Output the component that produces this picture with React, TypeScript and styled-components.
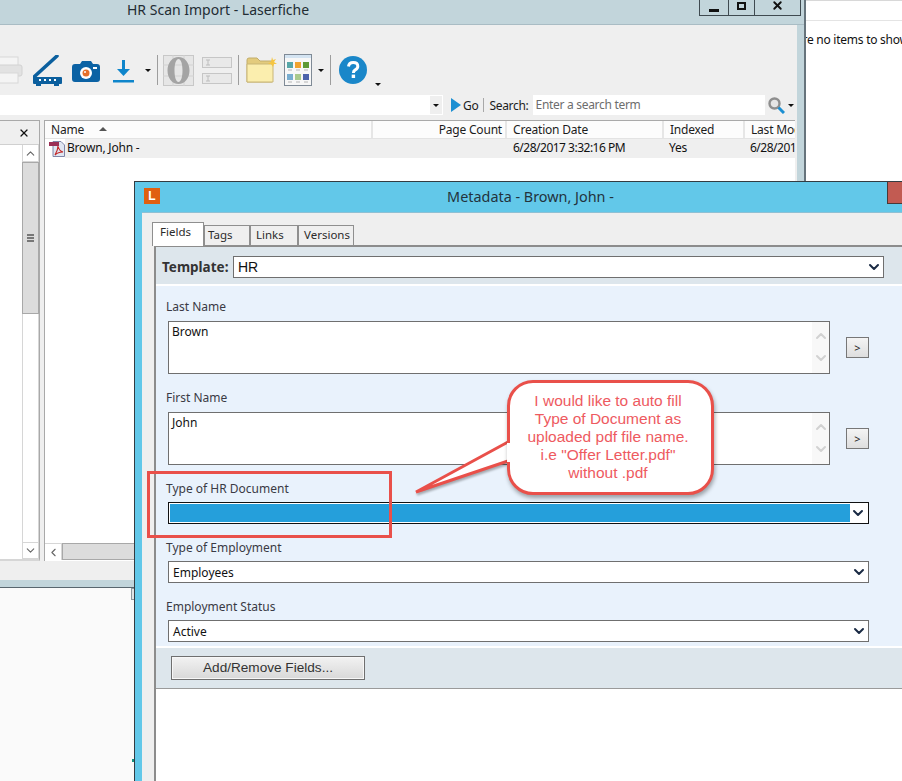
import * as React from 'react';
import styled, { createGlobalStyle } from 'styled-components';
import { ChevronDown, ChevronLeft, ChevronUp, X } from 'lucide-react';

const Global = createGlobalStyle`
  html, body {
    margin: 0;
    padding: 0;
    background: #fff;
  }
  * {
    box-sizing: border-box;
  }
`;

const uiFont = `'Noto Sans', 'Open Sans', sans-serif`;
const arial = `'Liberation Sans', Arial, sans-serif`;

const Desktop = styled.div`
  position: relative;
  width: 902px;
  height: 781px;
  overflow: hidden;
  background: #fff;
  font-family: ${uiFont};
  font-size: 12px;
  color: #1c1c1c;
`;

/* ---- back windows ---- */

const MainWindow = styled.div`
  position: absolute;
  left: 0;
  top: 0;
  width: 806px;
  height: 580px;
  display: flex;
  flex-direction: column;
  background: #fff;
  border-right: 2px solid #66747c;
`;

const TitleBar = styled.div`
  position: relative;
  height: 25px;
  flex: none;
  background: #c2d5db;
  border-bottom: 1px solid #a9bcc4;
  font-size: 14px;
  line-height: 19px;
  color: #222c33;
  padding-left: 127px;
`;

const WindowButtons = styled.div`
  position: absolute;
  left: 699px;
  top: 0;
  height: 16px;
  display: flex;
  border: 1px solid #3f4a50;
  border-top: 0;
`;

const WindowButton = styled.div<{ $w: number }>`
  width: ${p => p.$w}px;
  display: flex;
  align-items: center;
  justify-content: center;
  & + & {
    border-left: 1px solid #3f4a50;
  }
`;

const MinGlyph = styled.span`
  width: 10px;
  height: 3px;
  margin-top: 5px;
  background: #111;
`;

const MaxGlyph = styled.span`
  width: 9px;
  height: 8px;
  margin-top: -3px;
  border: 2px solid #111;
`;

const WindowBody = styled.div`
  flex: 1;
  display: flex;
  flex-direction: column;
  margin-right: 7px;
  background: #efefef;
  min-height: 0;
`;

const BodyBand = styled.div`
  position: absolute;
  top: 25px;
  right: 0;
  width: 7px;
  bottom: 0;
  background: #c2d5db;
`;

const Toolbar = styled.div`
  height: 70px;
  flex: none;
  display: flex;
  align-items: center;
  padding-top: 20px;
`;

const Tool = styled.span<{ $left: number; $top?: number }>`
  display: flex;
  flex: none;
  margin-left: ${p => p.$left}px;
  margin-top: ${p => p.$top || 0}px;
`;

const ToolSep = styled.span<{ $left: number }>`
  flex: none;
  width: 1px;
  height: 30px;
  margin-left: ${p => p.$left}px;
  background: #9d9d9d;
`;

const Caret = styled.span<{ $left: number; $top?: number }>`
  flex: none;
  margin-left: ${p => p.$left}px;
  margin-top: ${p => p.$top || 0}px;
  width: 0;
  height: 0;
  border-left: 3px solid transparent;
  border-right: 3px solid transparent;
  border-top: 3px solid #111;
`;

const AddressRow = styled.div`
  height: 20px;
  flex: none;
  display: flex;
  align-items: center;
  letter-spacing: -0.3px;
`;

const AddressField = styled.div`
  width: 443px;
  height: 20px;
  flex: none;
  background: #fff;
  display: flex;
  justify-content: flex-end;
  align-items: center;
`;

const AddressArrow = styled.div`
  width: 12px;
  height: 18px;
  margin-right: 1px;
  background: #efefef;
  display: flex;
  align-items: center;
  justify-content: center;
`;

const GoTriangle = styled.span`
  margin-left: 8px;
  width: 0;
  height: 0;
  border-top: 7px solid transparent;
  border-bottom: 7px solid transparent;
  border-left: 10px solid #1b8fd2;
`;

const GoLabel = styled.span`
  margin-left: 2px;
`;

const AddressSep = styled.span`
  width: 1px;
  height: 14px;
  margin: 0 5px 0 5px;
  background: #a8a8a8;
`;

const SearchField = styled.div`
  width: 232px;
  height: 20px;
  margin-left: 4px;
  padding-left: 3px;
  background: #fff;
  color: #6d6d6d;
  line-height: 20px;
`;

const SearchGo = styled.span`
  display: flex;
  align-items: center;
  margin-left: 3px;
`;

const Panes = styled.div`
  flex: 1;
  min-height: 0;
  margin-top: 5px;
  display: flex;
  padding-bottom: 19px;
`;

const TreePane = styled.div`
  width: 40px;
  flex: none;
  display: flex;
  flex-direction: column;
  background: #fff;
  border-top: 1px solid #a9a9a9;
  border-right: 1px solid #a9a9a9;
  border-bottom: 2px solid #d6d6d6;
`;

const TreeHead = styled.div`
  height: 24px;
  flex: none;
  background: #efefef;
  border-bottom: 1px solid #d0d0d0;
  display: flex;
  align-items: center;
  justify-content: flex-end;
  padding-right: 9px;
`;

const VScroll = styled.div`
  flex: 1;
  width: 17px;
  margin-left: 22px;
  display: flex;
  flex-direction: column;
  border-left: 1px solid #d6d6d6;
  border-right: 1px solid #d6d6d6;
  min-height: 0;
  justify-content: space-between;
`;

const ScrollButton = styled.div`
  height: 17px;
  flex: none;
  display: flex;
  align-items: center;
  justify-content: center;
  background: #fff;
  color: #666;
  border-bottom: 1px solid #d6d6d6;
`;

const ScrollEnd = styled(ScrollButton)`
  border-bottom: 1px solid #d6d6d6;
  border-top: 1px solid #d6d6d6;
`;

const VThumb = styled.div`
  height: 152px;
  margin: 0 -1px;
  flex: none;
  background: #dcdcdc;
  border: 1px solid #a8a8a8;
  display: flex;
  flex-direction: column;
  align-items: center;
  justify-content: center;
  gap: 1px;
`;

const GripLine = styled.span`
  width: 7px;
  height: 2px;
  background: #777;
`;

const Spacer = styled.div`
  flex: 1;
`;

const ListPane = styled.div`
  width: 751px;
  margin-left: 4px;
  flex: none;
  display: flex;
  flex-direction: column;
  background: #fff;
  border-top: 1px solid #a9a9a9;
  border-left: 1px solid #a9a9a9;
`;

const HeaderRow = styled.div`
  height: 18px;
  flex: none;
  display: flex;
  background: #fcfcfc;
  border-bottom: 1px solid #e3e3e3;
  letter-spacing: -0.2px;
`;

const HeaderCell = styled.div<{ $w: number; $right?: boolean }>`
  width: ${p => p.$w}px;
  flex: none;
  overflow: hidden;
  white-space: nowrap;
  padding: 0 ${p => (p.$right ? 3 : 0)}px 0 ${p => (p.$right ? 0 : 6)}px;
  text-align: ${p => (p.$right ? 'right' : 'left')};
  line-height: 17px;
  border-right: 2px solid #e6e6e6;
  position: relative;
  &:last-child {
    border-right: 0;
  }
`;

const SortCaret = styled.span`
  position: absolute;
  left: 54px;
  top: 6px;
  width: 0;
  height: 0;
  border-left: 4px solid transparent;
  border-right: 4px solid transparent;
  border-bottom: 4px solid #555;
`;

const DataRow = styled.div`
  height: 19px;
  flex: none;
  margin-left: 20px;
  display: flex;
  background: #efefef;
  position: relative;
`;

const DataCell = styled.div<{ $w: number; $tight?: boolean }>`
  width: ${p => p.$w}px;
  flex: none;
  overflow: hidden;
  white-space: nowrap;
  line-height: 18px;
  padding-left: 2px;
  color: #111;
  letter-spacing: ${p => (p.$tight ? -0.5 : -0.2)}px;
`;

const FileIcon = styled.span`
  position: absolute;
  left: -16px;
  top: 2px;
  display: flex;
`;

const HScroll = styled.div`
  height: 17px;
  margin-bottom: 1px;
  flex: none;
  display: flex;
  border-top: 1px solid #d6d6d6;
`;

const HButton = styled.div`
  width: 17px;
  flex: none;
  display: flex;
  align-items: center;
  justify-content: center;
  color: #666;
  border-right: 1px solid #d6d6d6;
`;

const HThumb = styled.div`
  flex: 1;
  background: #dcdcdc;
  border: 1px solid #a8a8a8;
  margin-top: -1px;
`;

const LowerWindow = styled.div`
  position: absolute;
  left: 0;
  top: 580px;
  width: 140px;
  height: 201px;
  background: #fafafa;
  border-top: 7px solid #c2d5db;
`;

const LowerLine = styled.div`
  height: 1px;
  background: #59666e;
`;

const LowerNotch = styled.div`
  position: absolute;
  left: 131px;
  top: 1px;
  width: 4px;
  height: 12px;
  background: #dfe4e6;
  border: 1px solid #8b979d;
`;

const LowerMark = styled.div`
  position: absolute;
  left: 132px;
  top: 172px;
  width: 3px;
  height: 3px;
  background: #13917e;
`;

const SideWindow = styled.div`
  position: absolute;
  left: 806px;
  top: 0;
  width: 96px;
  height: 182px;
  overflow: hidden;
  background: #fff;
  border-top: 1px solid #d8d8d8;
`;

const SideHead = styled.div`
  height: 20px;
  border-bottom: 1px solid #e4e4e4;
`;

const SideEmpty = styled.div`
  margin: 10px 0 0 -44px;
  white-space: nowrap;
  color: #111;
  letter-spacing: -0.25px;
`;

/* ---- metadata dialog ---- */

const Dialog = styled.div`
  position: absolute;
  left: 134px;
  top: 181px;
  width: 793px;
  height: 620px;
  display: flex;
  flex-direction: column;
  background: #62c8e9;
  border: 1px solid #333c42;
  padding: 0 0 0 7px;
`;

const DialogTitle = styled.div`
  position: relative;
  height: 30px;
  flex: none;
  margin-left: -7px;
  text-align: center;
  line-height: 30px;
  font-size: 14.4px;
  color: #22333d;
`;

const AppBadge = styled.div`
  position: absolute;
  left: 9px;
  top: 6px;
  width: 16px;
  height: 16px;
  background: #e05f10;
  color: #fff;
  font-family: ${arial};
  font-size: 12px;
  font-weight: 700;
  line-height: 16px;
  text-align: center;
`;

const CloseButton = styled.div`
  position: absolute;
  left: 752px;
  top: 0;
  width: 42px;
  height: 22px;
  background: #c25b52;
  border: 1px solid #4a3836;
  border-top: 0;
  display: flex;
  align-items: center;
  padding-left: 12px;
  color: #111;
`;

const DialogBody = styled.div`
  flex: 1;
  min-height: 0;
  background: #efefef;
  border-top: 1px solid #8fc0d4;
  padding: 9px 0 0 12px;
  display: flex;
  flex-direction: column;
`;

const TabRow = styled.div`
  display: flex;
  align-items: flex-end;
  height: 24px;
  flex: none;
  margin-left: -2px;
  position: relative;
  z-index: 1;
  margin-bottom: -1px;
`;

const Tab = styled.div<{ $active?: boolean; $w: number; $pad: number }>`
  width: ${p => p.$w}px;
  height: ${p => (p.$active ? 24 : 21)}px;
  background: ${p => (p.$active ? '#fff' : '#efefef')};
  border: 1px solid #8f8f8f;
  border-bottom: ${p => (p.$active ? '0' : '1px solid #8f8f8f')};
  padding-left: ${p => p.$pad}px;
  font-size: 11.5px;
  line-height: 18px;
  color: #2b2b2b;
  flex: none;
`;

const Panel = styled.div`
  flex: 1;
  background: #fff;
  border-left: 2px solid #8c8c8c;
  border-top: 2px solid #8c8c8c;
  display: flex;
  flex-direction: column;
`;

const TemplateBar = styled.div`
  height: 37px;
  flex: none;
  background: #dde6ec;
  display: flex;
  align-items: center;
  padding-left: 6px;
  padding-top: 2px;
`;

const TemplateLabel = styled.span`
  font-weight: 700;
  font-size: 13.5px;
  color: #333;
  width: 71px;
  flex: none;
`;

const Combo = styled.div<{ $w: number; $arial?: boolean }>`
  width: ${p => p.$w}px;
  height: 22px;
  flex: none;
  background: #fff;
  border: 1px solid #6f6f6f;
  display: flex;
  align-items: center;
  padding-left: 4px;
  font-family: ${p => (p.$arial ? arial : uiFont)};
  font-size: ${p => (p.$arial ? 14 : 12)}px;
  color: #111;
`;

const ActiveCombo = styled(Combo)`
  border-color: #111;
  padding: 1px;
`;

const ComboFill = styled.div`
  width: 680px;
  height: 18px;
  background: #259fdb;
`;

const ComboArrow = styled.span`
  margin-left: auto;
  margin-right: 1px;
  display: flex;
  color: #1a2a44;
`;

const FieldsArea = styled.div`
  height: 360px;
  flex: none;
  margin-top: 2px;
  background: #e9f2fc;
  padding: 11px 0 0 10px;
`;

const Field = styled.div<{ $gap?: number }>`
  margin-bottom: ${p => p.$gap || 0}px;
`;

const FieldLabel = styled.div<{ $after: number }>`
  height: 18px;
  margin-bottom: ${p => p.$after}px;
  line-height: 20px;
  color: #3a3a44;
`;

const TextRow = styled.div`
  display: flex;
  align-items: center;
  margin: 0 0 0 2px;
`;

const TextBox = styled.div`
  position: relative;
  width: 662px;
  height: 53px;
  flex: none;
  background: #fff;
  border: 1px solid #6f6f6f;
  padding: 1px 3px;
  color: #111;
`;

const TextScroll = styled.div`
  position: absolute;
  right: 0;
  top: 0;
  bottom: 0;
  width: 17px;
  background: #f8f8f8;
  display: flex;
  flex-direction: column;
  align-items: center;
  padding-top: 6px;
  gap: 6px;
  color: #d2d2d2;
`;

const ArrowButton = styled.div`
  width: 23px;
  height: 21px;
  margin-left: 16px;
  flex: none;
  border: 1px solid #777;
  background: linear-gradient(#f4f4f4, #dedede);
  text-align: center;
  line-height: 19px;
  color: #222;
  font-size: 11px;
`;

const ComboIndent = styled.div`
  margin-left: 2px;
`;

const BottomBar = styled.div`
  height: 41px;
  flex: none;
  margin-top: 2px;
  background: #dde6ec;
  border-bottom: 1px solid #9a9a9a;
  padding: 8px 0 0 15px;
`;

const AddButton = styled.div`
  width: 194px;
  height: 24px;
  border: 1px solid #6f6f6f;
  background: linear-gradient(#f2f2f2, #d8d8d8);
  box-shadow: inset 0 0 0 1px #f7f7f7;
  font-family: ${arial};
  font-size: 13.6px;
  line-height: 21px;
  text-align: center;
  color: #333;
`;

/* ---- annotation on top ---- */

const Highlight = styled.div`
  position: absolute;
  left: 147px;
  top: 471px;
  width: 245px;
  height: 67px;
  border: 3px solid #e9504a;
`;

const CalloutTail = styled.svg`
  position: absolute;
  left: 410px;
  top: 436px;
  filter: drop-shadow(1px 2px 1px rgba(0, 0, 0, 0.3));
`;

const Callout = styled.div`
  position: absolute;
  left: 507px;
  top: 380px;
  width: 207px;
  height: 115px;
  border: 3px solid #e9504a;
  border-radius: 26px;
  background: #fff;
  box-shadow: 1px 3px 4px rgba(0, 0, 0, 0.35);
  padding: 9px 5px 0 0;
  text-align: center;
  font-family: ${arial};
  font-size: 15.5px;
  line-height: 18px;
  color: #ee5a5f;
`;

const TailCover = styled.div`
  position: absolute;
  left: -3px;
  top: 60px;
  width: 4px;
  height: 19px;
  background: #fff;
`;

/* ---- toolbar drawings ---- */

const PrinterIcon = () => (
  <svg width="23" height="28" viewBox="0 0 23 28">
    <rect x="-6" y="1" width="24" height="9" fill="#f4f4f4" stroke="#d8d8d8" />
    <rect x="-8" y="9" width="30" height="11" rx="2" fill="#e2e2e2" stroke="#d2d2d2" />
    <rect x="-6" y="17" width="24" height="10" fill="#f4f4f4" stroke="#d8d8d8" />
  </svg>
);

const ScannerIcon = () => (
  <svg width="30" height="31" viewBox="0 0 30 31">
    <path d="M1 22 L24 1" stroke="#0b5f9e" strokeWidth="3.5" strokeLinecap="round" />
    <rect x="0" y="22" width="29" height="7" rx="1" fill="#0b5f9e" />
    <rect x="3" y="28" width="5" height="3" fill="#0b5f9e" />
    <rect x="21" y="28" width="5" height="3" fill="#0b5f9e" />
    <g fill="#fff">
      <rect x="6" y="24" width="2" height="2" />
      <rect x="11" y="24" width="2" height="2" />
      <rect x="16" y="24" width="2" height="2" />
      <rect x="21" y="24" width="2" height="2" />
    </g>
  </svg>
);

const CameraIcon = () => (
  <svg width="28" height="21" viewBox="0 0 28 21">
    <path d="M3 3 H8 L10 0 H19 L21 3 H25 Q28 3 28 6 V18 Q28 21 25 21 H3 Q0 21 0 18 V6 Q0 3 3 3 Z" fill="#0b62a4" />
    <circle cx="14" cy="12" r="6" fill="#fff" />
    <circle cx="14" cy="12" r="3.5" fill="#e5702a" />
    <circle cx="13" cy="11" r="1" fill="#fff" />
    <rect x="21" y="6" width="4" height="2" fill="#fff" />
  </svg>
);

const DownloadIcon = () => (
  <svg width="21" height="23" viewBox="0 0 21 23">
    <path d="M10.5 0 V14" stroke="#0e85cb" strokeWidth="3" />
    <path d="M4 9 L10.5 16 L17 9 Z" fill="#0e85cb" />
    <rect x="0" y="20" width="21" height="2.5" fill="#0e85cb" />
  </svg>
);

const BarcodeIcon = () => (
  <svg width="31" height="31" viewBox="0 0 31 31">
    <rect x="0.5" y="0.5" width="30" height="30" fill="#e6e6e6" stroke="#c8c8c8" />
    <path d="M0 10 H31 M0 21 H31 M10 0 V31 M21 0 V31" stroke="#d2d2d2" />
    <path
      fillRule="evenodd"
      fill="#a4a4a4"
      d="M15.5 2 C9 2 4.5 8 4.5 15.5 S9 29 15.5 29 S26.5 23 26.5 15.5 S22 2 15.5 2 Z M15.5 4 C18 4 19.5 9 19.5 15.5 S18 27 15.5 27 S11.5 22 11.5 15.5 S13 4 15.5 4 Z"
    />
  </svg>
);

const FieldsIcon = () => (
  <svg width="30" height="28" viewBox="0 0 30 28">
    <rect x="0.5" y="1.5" width="29" height="10" fill="#e9e9e9" stroke="#c6c6c6" />
    <rect x="0.5" y="17.5" width="29" height="10" fill="#e9e9e9" stroke="#c6c6c6" />
    <path d="M4 4 H8 M6 4 V9 M4 9 H8 M4 20 H8 M6 20 V25 M4 25 H8" stroke="#bdbdbd" />
  </svg>
);

const FolderIcon = () => (
  <svg width="31" height="26" viewBox="0 0 31 26">
    <path d="M1 3 Q1 1 3 1 H11 L14 4 H26 V25 H1 Z" fill="#e3cb7d" stroke="#c2ad6a" />
    <path d="M1 7 H27 V25 H1 Z" fill="#fbeeae" stroke="#c9b676" />
    <path d="M26 0 L27 3 L30 2 L28 5 L31 7 L28 7 L27 10 L25 7 L22 7 L25 5 Z" fill="#f5c542" />
  </svg>
);

const LayoutIcon = () => (
  <svg width="28" height="32" viewBox="0 0 28 32">
    <rect x="0.5" y="0.5" width="27" height="31" fill="#f7f7f7" stroke="#7f8a96" />
    <rect x="1" y="1" width="26" height="3" fill="#d4e4f2" />
    <rect x="3" y="8" width="6" height="6" fill="#57a7a8" />
    <rect x="11" y="8" width="6" height="6" fill="#f0a32f" />
    <rect x="19" y="8" width="6" height="6" fill="#5e9a35" />
    <rect x="3" y="20" width="6" height="6" fill="#78add0" />
    <rect x="11" y="20" width="6" height="6" fill="#a9c98c" />
    <rect x="19" y="20" width="6" height="6" fill="#4c63ab" />
    <path d="M4 16 H8 M12 16 H16 M20 16 H24 M4 28 H8 M12 28 H16 M20 28 H24" stroke="#b5b5b5" />
  </svg>
);

const HelpIcon = () => (
  <svg width="28" height="28" viewBox="0 0 28 28">
    <circle cx="14" cy="14" r="14" fill="#1a87c9" />
    <path d="M9.5 10.5 Q10 6.5 14.2 6.5 Q18.8 6.5 18.8 10.3 Q18.8 12.6 16.3 13.9 Q14.4 15 14.4 17" fill="none" stroke="#fff" strokeWidth="3" />
    <rect x="12.7" y="18.6" width="3.4" height="3.4" fill="#fff" />
  </svg>
);

const SearchIcon = () => (
  <svg width="17" height="17" viewBox="0 0 17 17">
    <circle cx="6.5" cy="6.5" r="5" fill="#e5e5e5" stroke="#8e8e8e" strokeWidth="2.4" />
    <path d="M10.5 10.5 L16 16" stroke="#1b8fd2" strokeWidth="3" />
  </svg>
);

const PdfIcon = () => (
  <svg width="16" height="16" viewBox="0 0 16 16">
    <path d="M4 0.5 H12 L15.5 4 V15.5 H4 Z" fill="#dfe6f2" stroke="#7f86a8" />
    <rect x="0" y="1" width="10" height="4" fill="#9b2f55" />
    <path d="M6 14 Q9 9 9 5 Q10 10 14 11 Q9 11 6 14 Z" fill="none" stroke="#c42c2c" strokeWidth="1.2" />
  </svg>
);

const columns = [
  { name: 'Page Count', w: 134, right: true },
  { name: 'Creation Date', w: 157 },
  { name: 'Indexed', w: 81 },
  { name: 'Last Modified', w: 50 },
];

const TextField = ({ label, value, gap }: { label: string; value: string; gap: number }) => (
  <Field $gap={gap}>
    <FieldLabel $after={6}>{label}</FieldLabel>
    <TextRow>
      <TextBox>
        {value}
        <TextScroll>
          <ChevronUp size={16} strokeWidth={3} />
          <ChevronDown size={16} strokeWidth={3} />
        </TextScroll>
      </TextBox>
      <ArrowButton>&gt;</ArrowButton>
    </TextRow>
  </Field>
);

const ComboField = ({ label, value, gap }: { label: string; value: string; gap: number }) => (
  <Field $gap={gap}>
    <FieldLabel $after={5}>{label}</FieldLabel>
    <ComboIndent>
      <Combo $w={701}>
        {value}
        <ComboArrow>
          <ChevronDown size={16} strokeWidth={3} />
        </ComboArrow>
      </Combo>
    </ComboIndent>
  </Field>
);

export default function App() {
  return (
    <Desktop>
      <Global />

      <SideWindow>
        <SideHead />
        <SideEmpty>There are no items to show</SideEmpty>
      </SideWindow>

      <MainWindow>
        <TitleBar>
          HR Scan Import - Laserfiche
          <WindowButtons>
            <WindowButton $w={28}><MinGlyph /></WindowButton>
            <WindowButton $w={26}><MaxGlyph /></WindowButton>
            <WindowButton $w={46}><X size={13} strokeWidth={3.5} color="#111" style={{ marginTop: -4 }} /></WindowButton>
          </WindowButtons>
        </TitleBar>
        <BodyBand />
        <WindowBody>
          <Toolbar>
            <Tool $left={0}><PrinterIcon /></Tool>
            <Tool $left={10}><ScannerIcon /></Tool>
            <Tool $left={9} $top={2}><CameraIcon /></Tool>
            <Tool $left={13} $top={2}><DownloadIcon /></Tool>
            <Caret $left={11} />
            <ToolSep $left={6} />
            <Tool $left={5}><BarcodeIcon /></Tool>
            <Tool $left={8}><FieldsIcon /></Tool>
            <ToolSep $left={6} />
            <Tool $left={7}><FolderIcon /></Tool>
            <Tool $left={7}><LayoutIcon /></Tool>
            <Caret $left={6} />
            <ToolSep $left={6} />
            <Tool $left={8}><HelpIcon /></Tool>
            <Caret $left={8} $top={28} />
          </Toolbar>
          <AddressRow>
            <AddressField>
              <AddressArrow><Caret $left={0} /></AddressArrow>
            </AddressField>
            <GoTriangle />
            <GoLabel>Go</GoLabel>
            <AddressSep />
            <span>Search:</span>
            <SearchField>Enter a search term</SearchField>
            <SearchGo>
              <SearchIcon />
              <Caret $left={3} />
            </SearchGo>
          </AddressRow>
          <Panes>
            <TreePane>
              <TreeHead><X size={12} strokeWidth={2.4} color="#111" /></TreeHead>
              <VScroll>
                <ScrollButton><ChevronUp size={13} /></ScrollButton>
                <VThumb>
                  <GripLine />
                  <GripLine />
                  <GripLine />
                </VThumb>
                <Spacer />
                <ScrollEnd><ChevronDown size={13} /></ScrollEnd>
              </VScroll>
            </TreePane>
            <ListPane>
              <HeaderRow>
                <HeaderCell $w={328}>Name<SortCaret /></HeaderCell>
                {columns.map(c => (
                  <HeaderCell key={c.name} $w={c.w} $right={c.right}>{c.name}</HeaderCell>
                ))}
              </HeaderRow>
              <DataRow>
                <FileIcon><PdfIcon /></FileIcon>
                <DataCell $w={446}>Brown, John -</DataCell>
                <DataCell $w={156} $tight>6/28/2017 3:32:16 PM</DataCell>
                <DataCell $w={81}>Yes</DataCell>
                <DataCell $w={47} $tight>6/28/2017 3:32:16 PM</DataCell>
              </DataRow>
              <Spacer />
              <HScroll>
                <HButton><ChevronLeft size={13} /></HButton>
                <HThumb />
              </HScroll>
            </ListPane>
          </Panes>
        </WindowBody>
      </MainWindow>

      <LowerWindow>
        <LowerLine />
        <LowerNotch />
        <LowerMark />
      </LowerWindow>

      <Dialog>
        <DialogTitle>
          <AppBadge>L</AppBadge>
          Metadata - Brown, John -
          <CloseButton><X size={12} strokeWidth={3} /></CloseButton>
        </DialogTitle>
        <DialogBody>
          <TabRow>
            <Tab $active $w={52} $pad={7}>Fields</Tab>
            <Tab $w={46} $pad={3}>Tags</Tab>
            <Tab $w={48} $pad={5}>Links</Tab>
            <Tab $w={56} $pad={5}>Versions</Tab>
          </TabRow>
          <Panel>
            <TemplateBar>
              <TemplateLabel>Template:</TemplateLabel>
              <Combo $w={651} $arial>
                HR
                <ComboArrow><ChevronDown size={16} strokeWidth={3} /></ComboArrow>
              </Combo>
            </TemplateBar>
            <FieldsArea>
              <TextField label="Last Name" value="Brown" gap={14} />
              <TextField label="First Name" value="John" gap={14} />
              <Field $gap={14}>
                <FieldLabel $after={5}>Type of HR Document</FieldLabel>
                <ComboIndent>
                  <ActiveCombo $w={701}>
                    <ComboFill />
                    <ComboArrow><ChevronDown size={16} strokeWidth={3} /></ComboArrow>
                  </ActiveCombo>
                </ComboIndent>
              </Field>
              <ComboField label="Type of Employment" value="Employees" gap={14} />
              <ComboField label="Employment Status" value="Active" gap={0} />
            </FieldsArea>
            <BottomBar>
              <AddButton>Add/Remove Fields...</AddButton>
            </BottomBar>
          </Panel>
        </DialogBody>
      </Dialog>

      <Highlight />
      <CalloutTail width="100" height="62" viewBox="0 0 100 62">
        <path d="M98 6 L6 56 L98 25" fill="#fff" stroke="#e9504a" strokeWidth="3" />
      </CalloutTail>
      <Callout>
        <TailCover />
        I would like to auto fill
        <br />
        Type of Document as
        <br />
        uploaded pdf file name.
        <br />
        i.e "Offer Letter.pdf"
        <br />
        without .pdf
      </Callout>
    </Desktop>
  );
}
